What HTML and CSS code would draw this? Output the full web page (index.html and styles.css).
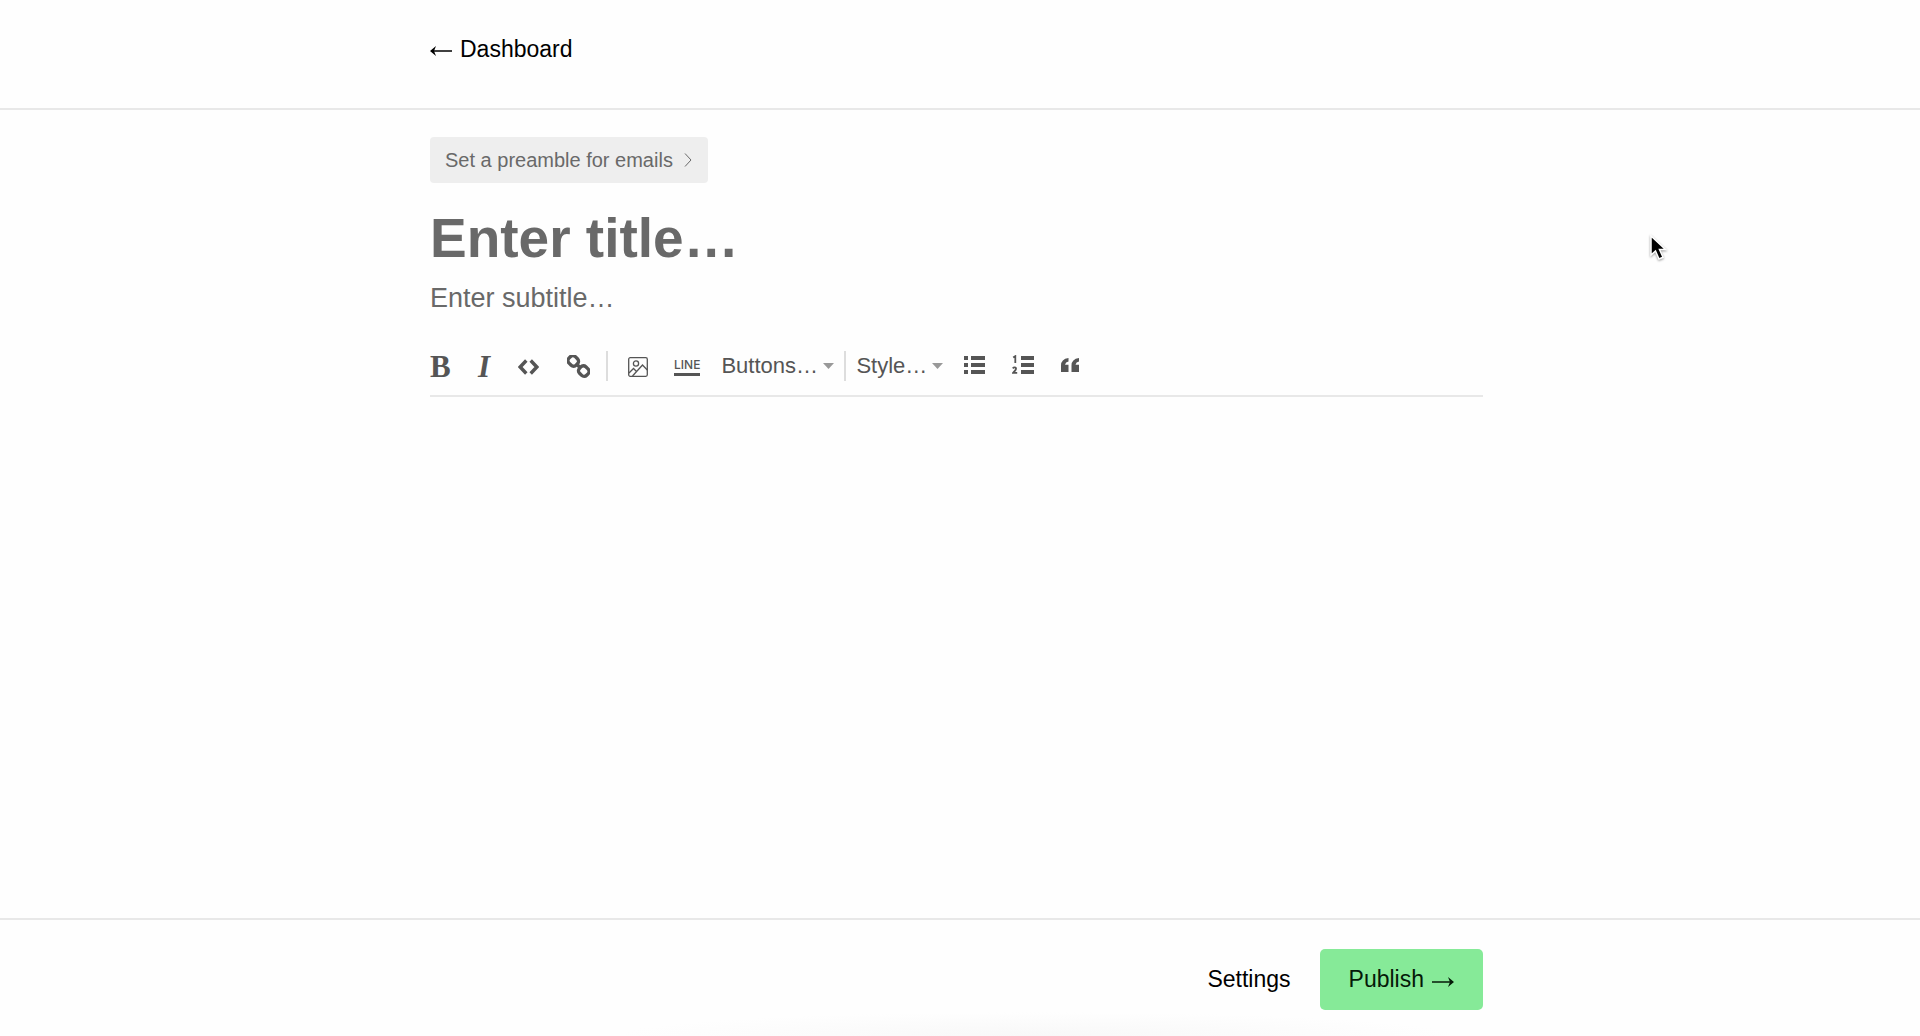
FILE: index.html
```html
<!DOCTYPE html>
<html lang="en">
<head>
  <meta charset="UTF-8">
  <meta name="viewport" content="width=device-width, initial-scale=1.0">
  <title>New post</title>
  <link rel="stylesheet" href="styles.css">
</head>
<body>
  <header class="topbar">
    <div class="container">
      <a class="back" href="#">
        <svg class="arrow" width="22" height="14" viewBox="0 0 22 14" aria-hidden="true"><path d="M1.500 7H22"/><path class="head" d="M0 7l6-5-2 5 2 5z"/></svg>
        Dashboard
      </a>
    </div>
  </header>

  <main class="editor">
    <div class="container">
      <button class="preamble" type="button">
        Set a preamble for emails
        <svg width="8" height="14" viewBox="0 0 8 14" aria-hidden="true"><path d="M1 .5L7 7 1 13.500"/></svg>
      </button>

      <input class="title" type="text" placeholder="Enter title…" aria-label="Title">
      <input class="subtitle" type="text" placeholder="Enter subtitle…" aria-label="Subtitle">

      <div class="toolbar" role="toolbar" aria-label="Formatting">
        <div class="group text-tools">
          <button class="tool bold" type="button" aria-label="Bold">B</button>
          <button class="tool italic" type="button" aria-label="Italic">I</button>
          <button class="tool" type="button" aria-label="Code">
            <svg width="21" height="16" viewBox="0 0 21 16"><path class="thick" d="M8.300 1.500L2.200 8 8.300 14.500M12.700 1.500L18.800 8 12.700 14.500"/></svg>
          </button>
          <button class="tool" type="button" aria-label="Link">
            <svg width="23" height="24" viewBox="0 0 23 24">
              <g class="thick" transform="rotate(44 11.500 11)">
                <rect x="-.8" y="6.500" width="10" height="9" rx="3.500"/>
                <rect x="13.800" y="6.500" width="10" height="9" rx="3.500"/>
                <path d="M8 11h7"/>
              </g>
            </svg>
          </button>
        </div>
        <div class="group insert-tools">
          <button class="tool" type="button" aria-label="Image">
            <svg width="20" height="20" viewBox="0 0 20 20">
              <g class="thin">
                <rect x=".7" y=".7" width="18.600" height="18.600" rx="1.500"/>
                <circle cx="8" cy="6.500" r="2.600"/>
                <path d="M1 16l4.500-4.500 3 3M4.500 19L14.500 8l4.800 5"/>
              </g>
            </svg>
          </button>
          <button class="tool line" type="button">LINE</button>
          <span class="select">
            <select aria-label="Buttons"><option>Buttons…</option></select>
            <svg width="11" height="6" viewBox="0 0 11 6" aria-hidden="true"><path d="M0 0h11L5.500 6z"/></svg>
          </span>
        </div>
        <div class="group block-tools">
          <span class="select">
            <select aria-label="Style"><option>Style…</option></select>
            <svg width="11" height="6" viewBox="0 0 11 6" aria-hidden="true"><path d="M0 0h11L5.500 6z"/></svg>
          </span>
          <div class="lists">
            <button class="tool" type="button" aria-label="Bulleted list">
              <svg width="21" height="20" viewBox="0 0 21 20"><path d="M0 1h4v4H0zM7 1h14v4H7zM0 8h4v4H0zM7 8h14v4H7zM0 15h4v4H0zM7 15h14v4H7z"/></svg>
            </button>
            <button class="tool" type="button" aria-label="Numbered list">
              <svg width="22" height="20" viewBox="0 0 22 20">
                <path d="M9 1h13v4H9zM9 8h13v4H9zM9 15h13v4H9z"/>
                <path class="digits" d="M1.200 2.600L3.300 1.200V8M.7 13.300Q2 12 3.400 12.500 4.600 13.400 3.400 15.200L1.200 17.800H5.200"/>
              </svg>
            </button>
            <button class="tool" type="button" aria-label="Quote">
              <svg width="18" height="20" viewBox="0 0 18 20"><path d="M0 17V10.500Q0 4 7.500 3V6.500Q4.500 7 4 9.800H7.500V17zM10.500 17V10.500Q10.500 4 18 3V6.500Q15 7 14.500 9.800H18V17z"/></svg>
            </button>
          </div>
        </div>
      </div>
      <div class="content" contenteditable="true" role="textbox" aria-label="Post body"></div>
    </div>
  </main>

  <footer class="bottombar">
    <div class="container">
      <button class="settings" type="button">Settings</button>
      <button class="publish" type="button">
        Publish
        <svg class="arrow" width="22" height="14" viewBox="0 0 22 14" aria-hidden="true"><path d="M0 7H20.500"/><path class="head" d="M22 7l-6-5 2 5-2 5z"/></svg>
      </button>
    </div>
  </footer>

  <svg class="pointer" width="20" height="30" viewBox="0 0 20 30" aria-hidden="true"><path d="M2 2V21L6.500 17 10 25 14 23.300 10.500 15.500H16.500z"/></svg>
</body>
</html>
```
FILE: styles.css
```css
:root {
  --text: #000;
  --muted: #696969;
  --tool: #555;
  --line: #e8e8e8;
  --panel: #eee;
  --green: #86ea98;
}
* {
  box-sizing: border-box;
}
body {
  margin: 0;
  min-height: 100vh;
  display: flex;
  flex-direction: column;
  position: relative;
  background: #fefefe;
  color: var(--text);
  font-family: "Liberation Sans", Arial, Helvetica, sans-serif;
  font-size: 23px;
}
button, input, select {
  font: inherit;
  color: inherit;
  border: none;
  background: none;
  padding: 0;
  margin: 0;
}
button {
  cursor: pointer;
}
svg {
  display: block;
  flex: none;
}
.topbar, .editor, .bottombar {
  padding-right: 7px;
}
.container {
  width: 100%;
  max-width: 1053px;
  margin: 0 auto;
}

/* Top bar */
.topbar {
  padding-top: 35px;
  height: 110px;
  border-bottom: 2px solid var(--line);
}
.back {
  display: inline-flex;
  align-items: center;
  gap: 8px;
  line-height: 28px;
  color: inherit;
  text-decoration: none;
}
.arrow {
  margin-top: 4px;
  fill: none;
  stroke: currentColor;
  stroke-width: 1.5;
}
.arrow .head {
  fill: currentColor;
  stroke: none;
}

/* Editor */
.editor {
  flex: 1;
  display: flex;
  padding-top: 27px;
}
.editor .container {
  display: flex;
  flex-direction: column;
}
.preamble {
  align-self: flex-start;
  display: flex;
  align-items: center;
  gap: 11px;
  height: 46px;
  padding: 0 16px 0 15px;
  border-radius: 4px;
  background: var(--panel);
  color: var(--muted);
  font-size: 20px;
}
.preamble svg {
  fill: none;
  stroke: currentColor;
}
.title, .subtitle {
  width: 100%;
  outline: none;
}
.title {
  height: 64px;
  margin-top: 23px;
  font-size: 55px;
  font-weight: bold;
}
.subtitle {
  height: 36px;
  margin-top: 10px;
  font-size: 27px;
}
.title::placeholder, .subtitle::placeholder {
  color: var(--muted);
  opacity: 1;
}

/* Toolbar */
.toolbar {
  display: flex;
  align-items: center;
  height: 61px;
  margin-top: 20px;
  border-bottom: 2px solid var(--line);
  color: var(--tool);
}
.group {
  display: flex;
  align-items: center;
  height: 30px;
}
.group + .group {
  border-left: 2px solid #ddd;
}
.text-tools {
  gap: 28px;
  padding-right: 16px;
}
.text-tools .tool, .insert-tools .tool {
  margin-top: 2px;
}
.insert-tools {
  gap: 26px;
  padding: 0 10px 0 20px;
}
.insert-tools .select {
  margin-left: -5px;
}
.block-tools {
  gap: 21px;
  padding-left: 10px;
}
.lists {
  display: flex;
  gap: 27px;
  padding-bottom: 2px;
}
.tool svg {
  fill: currentColor;
}
.tool .thick {
  fill: none;
  stroke: currentColor;
  stroke-width: 3.4;
}
.tool .thin, .tool .digits {
  fill: none;
  stroke: currentColor;
  stroke-width: 1.3;
}
.tool .digits {
  stroke-width: 1.8;
}
.bold, .italic {
  width: 20px;
  font: bold 31px/30px "Liberation Serif", "Times New Roman", serif;
}
.italic {
  width: 12px;
  font-style: italic;
}
.line {
  padding-bottom: 1px;
  border-bottom: 3px solid var(--tool);
  font: 500 12px/14px Inter, "Liberation Sans", sans-serif;
}
.select {
  display: flex;
  align-items: center;
  gap: 5px;
  font-size: 22px;
}
.select select {
  appearance: none;
  outline: none;
}
.select svg {
  fill: #999;
}
.content {
  flex: 1;
  padding: 24px 0;
  outline: none;
}

/* Bottom bar */
.bottombar {
  height: 118px;
  padding-top: 29px;
  border-top: 2px solid var(--line);
  background: radial-gradient(ellipse 420px 24px at 54% 100%, #f8f8f8, #fefefe);
}
.bottombar .container {
  display: flex;
  align-items: center;
  justify-content: flex-end;
  gap: 29px;
}
.publish {
  display: flex;
  align-items: center;
  gap: 8px;
  height: 61px;
  padding: 0 29px;
  border-radius: 5px;
  background: var(--green);
  color: #051a08;
}

.pointer {
  position: absolute;
  left: 86%;
  top: 234px;
  margin-left: -2px;
  stroke: #fff;
  stroke-width: 1.5;
  filter: drop-shadow(0 1px 1px #0006);
  pointer-events: none;
}
```
